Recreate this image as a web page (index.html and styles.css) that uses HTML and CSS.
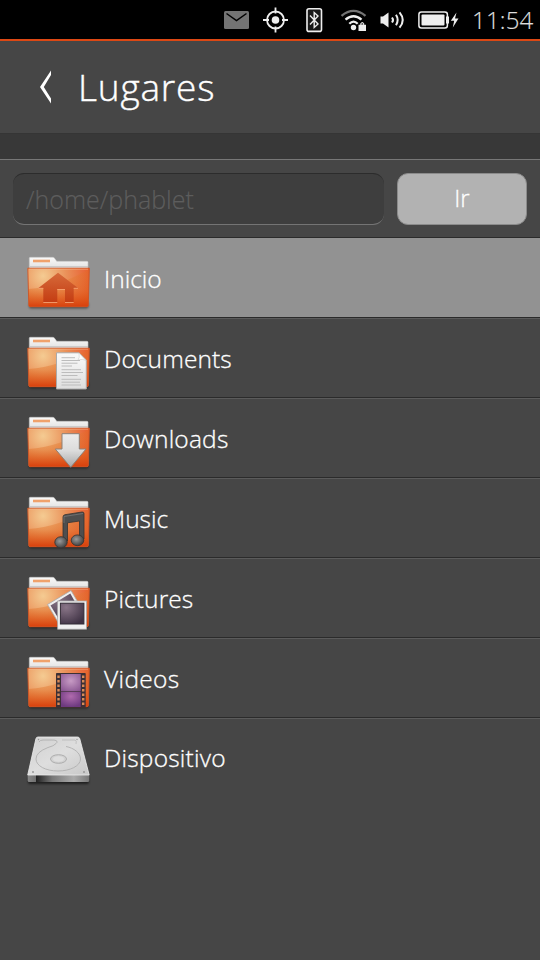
FILE: index.html
```
<!DOCTYPE html>
<html lang="es">
<head>
<meta charset="utf-8">
<title>Lugares</title>
<link rel="stylesheet" href="styles.css">
</head>
<body>
<svg class="defs" width="0" height="0" aria-hidden="true">
  <defs>
    <radialGradient id="body" gradientUnits="userSpaceOnUse" cx="17" cy="22" r="52">
      <stop offset="0" stop-color="#f4cb92"/><stop offset=".45" stop-color="#ea9159"/><stop offset=".8" stop-color="#e8683a"/><stop offset="1" stop-color="#e4511f"/>
    </radialGradient>
    <linearGradient id="low" x1="0" y1="0" x2="0" y2="1">
      <stop offset="0" stop-color="#dd7a1c" stop-opacity=".15"/><stop offset=".55" stop-color="#e06a20" stop-opacity=".4"/><stop offset="1" stop-color="#d83f0c"/>
    </linearGradient>
    <linearGradient id="paper" x1="0" y1="0" x2="0" y2="1"><stop offset="0" stop-color="#fafafa"/><stop offset="1" stop-color="#dedede"/></linearGradient>
    <linearGradient id="house" x1="0" y1="0" x2="0" y2="1"><stop offset="0" stop-color="#d66a3a"/><stop offset="1" stop-color="#c43c12"/></linearGradient>
    <linearGradient id="arrow" x1="0" y1="0" x2="0" y2="1"><stop offset="0" stop-color="#ececec"/><stop offset=".5" stop-color="#dcdcdc"/><stop offset="1" stop-color="#a8a8a8"/></linearGradient>
    <radialGradient id="note" cx=".4" cy=".4" r=".6"><stop offset="0" stop-color="#999"/><stop offset="1" stop-color="#444"/></radialGradient>
    <radialGradient id="photo" cx=".25" cy=".2" r=".9"><stop offset="0" stop-color="#8a7688"/><stop offset="1" stop-color="#3f3244"/></radialGradient>
    <radialGradient id="film" cx=".5" cy=".4" r=".7"><stop offset="0" stop-color="#c79bc4"/><stop offset="1" stop-color="#8b5793"/></radialGradient>
    <radialGradient id="film2" cx=".5" cy=".3" r=".7"><stop offset="0" stop-color="#b06bae"/><stop offset="1" stop-color="#6e3a80"/></radialGradient>
    <linearGradient id="disk" x1="0" y1="0" x2="1" y2="1"><stop offset="0" stop-color="#d0d0d0"/><stop offset=".5" stop-color="#dedede"/><stop offset="1" stop-color="#c8c8c8"/></linearGradient>
    <linearGradient id="front" x1="0" y1="0" x2="1" y2="0"><stop offset="0" stop-color="#888"/><stop offset=".13" stop-color="#707070"/><stop offset=".14" stop-color="#222"/><stop offset=".4" stop-color="#777"/><stop offset=".75" stop-color="#aaa"/><stop offset="1" stop-color="#777"/></linearGradient>
    <filter id="soft" x="-20%" y="-20%" width="140%" height="160%"><feGaussianBlur stdDeviation="1"/></filter>
    <symbol id="folder" viewBox="0 0 66 60">
      <rect x="3" y="48" width="59.500" height="6.500" rx="2" fill="#000" opacity=".45" filter="url(#soft)"/>
      <path d="M3.300 16V4.200Q3.300 3.300 4.300 3.300H26.500Q28 3.300 28.800 4.500L30.700 7.300H61Q62 7.300 62 8.300V16Z" fill="url(#paper)" stroke="#c4c4c4" stroke-width=".6"/>
      <rect x="7" y="5.700" width="17" height="2.600" fill="#f0a26c"/>
      <path d="M4 12.700H62" stroke="#bbb" stroke-width=".8"/>
      <path d="M1.700 14H63.400L62.400 51.500Q62.300 53 60.800 53H4.300Q2.800 53 2.700 51.500Z" fill="url(#body)"/>
      <path d="M2.500 35Q33 33 63 15L62.200 51.500Q62.100 53 60.600 53H4.500Q3 53 2.900 51.500Z" fill="url(#low)"/>
      <path d="M1.800 14.200H63.300L62.300 51.500Q62.200 52.700 60.700 52.700H4.400Q2.900 52.700 2.800 51.500Z" fill="none" stroke="#cd5425" stroke-width=".9"/>
      <path d="M3 15.200H62" stroke="#f7b994" stroke-width=".6"/>
    </symbol>
  </defs>
</svg>
<div class="screen">
  <div class="status">
    <svg class="indicators" width="252" height="39" viewBox="214 0 252 39">
      <rect x="224" y="11" width="25" height="18" rx="1.500" fill="#737373"/>
      <path d="M226.500 13.500L236.500 20.500L246.500 13.500" fill="none" stroke="#000" stroke-width="1.500"/>
      <g fill="none" stroke="#eee" stroke-width="1.800"><circle cx="275.500" cy="20" r="8.500"/><path d="M275.500 7.500V13.500M275.500 26.500V32.500M263 20H269M282 20H288"/></g>
      <circle cx="275.500" cy="20" r="3.800" fill="#eee"/>
      <rect x="307" y="8.800" width="14.500" height="22.600" rx="2" fill="#181818" stroke="#eee" stroke-width="1.600"/>
      <path d="M310 15.500L318 24L314.200 27.500V12.500L318 16L310 24.500" fill="none" stroke="#eee" stroke-width="1.400"/>
      <g fill="none" stroke-width="2.300"><path d="M341.500 15.800Q353.500 6 365.500 15.800" stroke="#737373"/><path d="M345.500 19.700Q353.500 12.800 361.500 19.700M349.300 23.700Q353.500 19.500 357.700 23.700" stroke="#eee"/></g>
      <circle cx="353.500" cy="27.500" r="2.700" fill="#eee"/>
      <path d="M358.500 24.800H366V31H358.500ZM360.300 25V23.500Q362.300 20.500 364.200 23.500V25" fill="#eee"/><path d="M361.300 24.500V23.800Q362.300 22.600 363.200 23.800V24.500Z" fill="#000"/>
      <path d="M380.500 16.500H383L388.500 12.500V27.500L383 23.500H380.500Z" fill="#eee"/>
      <g fill="none" stroke="#eee" stroke-width="2"><path d="M392 17.500Q394 20 392 22.500M396 14.800Q399.300 20 396 25.200M399.500 12.300Q406 20 399.500 27.700"/></g>
      <rect x="418.900" y="12" width="28.500" height="16" rx="2.500" fill="none" stroke="#eee" stroke-width="1.500"/>
      <rect x="421.500" y="14.500" width="23" height="11" rx="1" fill="#eee"/><rect x="446" y="16.500" width="3" height="7" fill="#eee"/>
      <path d="M456.500 12.500L450.800 20.700H454.200L452.800 27.500L458.500 18.500H455Z" fill="#eee"/>
    </svg>
    <span class="clock">11:54</span>
  </div>
  <div class="header">
    <svg width="14" height="36" viewBox="0 0 14 36"><path d="M12 1.500V6L4.800 18L12 29.500V34.500L1 18Z" fill="#fff"/></svg>
    <h1>Lugares</h1>
  </div>
  <div class="band"></div>
  <div class="path">
    <div class="field">/home/phablet</div>
    <div class="go">Ir</div>
  </div>
  <div class="list">
    <div class="row selected">
      <svg viewBox="0 0 66 60"><use href="#folder"/>
        <path d="M32 18.700L52 34H47.700V48.500H39V35H31.300V48.500H17.300V34H12.500Z" fill="url(#house)"/>
        <path d="M17.300 48.500H31.300M39 48.500H47.700M12.500 34.300H17.300M47.700 34.300H52M31.300 35.500H39" stroke="#f5a070" stroke-width=".9"/>
      </svg><span class="inicio">Inicio</span></div>
    <div class="row">
      <svg viewBox="0 0 66 60"><use href="#folder"/>
        <path d="M30.500 18.800H53L60.300 26V55H30.500Z" fill="url(#paper)" stroke="#aaa" stroke-width="1"/>
        <path d="M53 19Q54 24 52 26Q57 24.500 60 26.500Z" fill="#fff" stroke="#ccc" stroke-width=".6"/>
        <path d="M35.500 23.700H49M35.500 26.500H54M35.500 29.200H51.500M35.500 32H46M35.500 35.700H55M35.500 38.500H57M35.500 41.500H51.500M35.500 45.300H55M35.500 48.200H54M35.500 51H55" stroke="#bcbcbc" stroke-width="1"/>
      </svg><span class="documents">Documents</span></div>
    <div class="row">
      <svg viewBox="0 0 66 60"><use href="#folder"/>
        <path d="M36 19.700H53.300V35H60L44.700 53.300L29.300 35H36Z" fill="url(#arrow)" stroke="#8d8178" stroke-width="1"/>
      </svg><span class="downloads">Downloads</span></div>
    <div class="row">
      <svg viewBox="0 0 66 60"><use href="#folder"/>
        <path d="M37 46V23Q37 21 39 20.700L56 18Q58 17.800 58 19.500V45H53.500V27L41.500 28.800V47Z" fill="#4e4e4e" stroke="#333" stroke-width=".8"/>
        <g fill="url(#note)" stroke="#333" stroke-width=".8"><ellipse cx="35" cy="48.300" rx="6.200" ry="5.600"/><ellipse cx="51.500" cy="46.300" rx="6.300" ry="5.400"/></g>
        <path d="M38 29V22.500L57 19.500" fill="none" stroke="#777" stroke-width=".8"/>
      </svg><span class="music">Music</span></div>
    <div class="row">
      <svg viewBox="0 0 66 60"><use href="#folder"/>
        <path d="M21.500 30.500L45 16.500L59 40L35.500 54Z" fill="#eee" stroke="#aaa" stroke-width=".8"/>
        <path d="M24.500 31.500L44.300 19.500L53 35L34 47Z" fill="url(#photo)"/>
        <rect x="31.700" y="27" width="28.800" height="28.200" fill="#f0f0f0" stroke="#aaa" stroke-width=".8"/>
        <rect x="34.400" y="29.200" width="23.500" height="20.800" fill="url(#photo)" stroke="#332c36" stroke-width="1"/>
      </svg><span class="pictures">Pictures</span></div>
    <div class="row">
      <svg viewBox="0 0 66 60"><use href="#folder"/>
        <rect x="30" y="19" width="29.700" height="34.700" rx=".8" fill="#3c3035"/>
        <rect x="35" y="20" width="19.700" height="17.200" fill="url(#film)"/><rect x="35" y="37.800" width="19.700" height="15.200" fill="url(#film2)"/>
        <path d="M32.500 21.500V53M57.200 21.500V53" stroke="#d98a58" stroke-width="2.400" stroke-dasharray="2.400 2.100"/>
      </svg><span class="videos">Videos</span></div>
    <div class="row last">
      <svg viewBox="0 0 66 60">
        <rect x="2" y="43" width="61" height="7" rx="2" fill="#000" opacity=".55" filter="url(#soft)"/>
        <path d="M1.700 41H63.200V46.500Q63.200 48 61.700 48H3.200Q1.700 48 1.700 46.500Z" fill="url(#front)"/>
        <path d="M12 3H51.500Q53.300 3 53.800 4.800L63.200 41H1.700L9.900 4.800Q10.300 3 12 3Z" fill="url(#disk)" stroke="#ededed" stroke-width=".8"/>
        <path d="M13 8Q14 6 17 6H28Q33 7 30 9.500Q28 12 22 13.500Q10 18 10 25C10 32 20 37 32 37S54.500 32 54.500 25C54.500 19 48 14 40 12.500" fill="none" stroke="#b0b0b0" stroke-width=".9"/>
        <path d="M36 6H49Q51 7 50 10" fill="none" stroke="#b5b5b5" stroke-width=".7"/>
        <ellipse cx="32.500" cy="25" rx="8" ry="4.300" fill="#d2d2d2" stroke="#a2a2a2" stroke-width=".8"/><ellipse cx="32.500" cy="25" rx="5.500" ry="2.700" fill="#dedede"/>
        <g fill="#999"><circle cx="7" cy="38" r="1"/><circle cx="58" cy="38" r="1"/><circle cx="12.500" cy="5.500" r=".7"/><circle cx="51" cy="5.500" r=".7"/></g>
      </svg><span class="dispositivo">Dispositivo</span></div>
  </div>
</div>
</body>
</html>
```
FILE: styles.css
```
* { box-sizing: border-box; }
body { margin: 0; background: #464646; font-family: "Open Sans", "Noto Sans", sans-serif; font-weight: 300; color: #fff; }
.defs { display: block; height: 0; }
.screen { width: 540px; height: 960px; overflow: hidden; background: #464646; }
.status { height: 41px; background: #000; border-bottom: 2px solid #dd4814; display: flex; justify-content: flex-end; align-items: center; padding-right: 7px; }
.clock { width: 61px; margin-left: 6px; font-size: 24px; line-height: 39px; color: #ddd; white-space: nowrap; letter-spacing: .2px; -webkit-text-stroke: .2px #ddd; }
.header { height: 92px; display: flex; align-items: center; padding: 0 0 0 39px; }
.header h1 { margin: 0 0 0 25px; font-size: 37px; line-height: 50px; font-weight: 300; letter-spacing: .8px; -webkit-text-stroke: .4px #fff; }
.band { height: 27px; background: #383838; border-top: 1px solid #353535; border-bottom: 1px solid #777; }
.path { height: 78px; padding: 13px; display: flex; gap: 13px; border-bottom: 1px solid #2b2b2b; }
.field { width: 371px; height: 52px; border-radius: 11px; background: #3e3e3e; border-top: 1px solid #2c2c2c; border-bottom: 1px solid #747474; color: #5d5d5d; font-size: 25px; line-height: 50px; padding-left: 13px; -webkit-text-stroke: .2px #5d5d5d; }
.go { width: 130px; height: 52px; border-radius: 11px; background: #b2b2b2; border: 1px solid #8b8b8b; text-align: center; font-size: 24px; line-height: 48px; -webkit-text-stroke: .3px #fff; }
.row { height: 80px; border-top: 1px solid #5b5b5b; border-bottom: 1px solid #2b2b2b; display: flex; padding: 15px 0 0 26px; font-size: 24.5px; }
.row svg { width: 66px; height: 60px; flex: none; }
.row span { margin-left: 12px; line-height: 50px; white-space: nowrap; -webkit-text-stroke: .3px #fff; }
.documents, .pictures { letter-spacing: .1px; }
.downloads, .dispositivo { letter-spacing: .2px; }
.videos { letter-spacing: .35px; }
.row.selected { background: #929292; border-top-color: #929292; }
.row.last { border-bottom: 0; }
.row.last span { line-height: 48px; }
```
